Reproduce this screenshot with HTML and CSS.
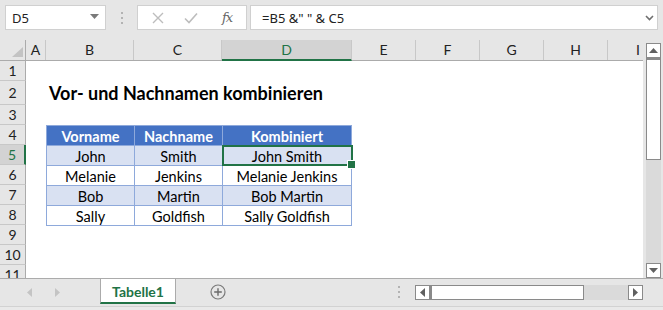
FILE: index.html
```html
<!DOCTYPE html>
<html>
<head>
<meta charset="utf-8">
<link rel="stylesheet" href="styles.css">
</head>
<body>
<div class="app">
  <div class="toolbar">
    <div class="namebox">
      <span class="nb-text">D5</span>
      <svg class="nb-arrow" width="9" height="5" viewBox="0 0 9 5"><polygon points="0,0 9,0 4.5,5" fill="#7a7a7a"/></svg>
    </div>
    <div class="grip">
      <span></span><span></span><span></span>
    </div>
    <div class="fbtns">
      <svg width="12" height="12" viewBox="0 0 12 12"><path d="M1 1 L11 11 M11 1 L1 11" stroke="#bdbdbd" stroke-width="1.4" fill="none"/></svg>
      <svg width="14" height="12" viewBox="0 0 14 12"><path d="M1 6.5 L5 10.5 L13 1.5" stroke="#bdbdbd" stroke-width="1.6" fill="none"/></svg>
      <span class="fx">fx</span>
    </div>
    <div class="formula">
      <span class="f-text">=B5 &amp;" " &amp; C5</span>
      <svg class="f-chev" width="9" height="6" viewBox="0 0 9 6"><path d="M1 1 L4.5 4.5 L8 1" stroke="#6f6f6f" stroke-width="1.6" fill="none"/></svg>
    </div>
  </div>

  <div class="main">
    <div class="sheet">
      <div class="colhdrs">
        <div class="corner"><svg width="11" height="10" viewBox="0 0 11 10"><polygon points="11,0 11,10 0,10" fill="#c3c3c3"/></svg></div>
        <div class="ch w-a">A</div>
        <div class="ch w-b">B</div>
        <div class="ch w-c">C</div>
        <div class="ch w-d sel">D</div>
        <div class="ch w-e">E</div>
        <div class="ch w-e">F</div>
        <div class="ch w-e">G</div>
        <div class="ch w-e">H</div>
        <div class="ch w-i">I</div>
      </div>
      <div class="sheetbody">
        <div class="rowhdrs">
          <div class="rh">1</div>
          <div class="rh tall">2</div>
          <div class="rh">3</div>
          <div class="rh">4</div>
          <div class="rh sel">5</div>
          <div class="rh">6</div>
          <div class="rh">7</div>
          <div class="rh">8</div>
          <div class="rh">9</div>
          <div class="rh">10</div>
          <div class="rh">11</div>
        </div>
        <div class="cells">
          <div class="title">Vor- und Nachnamen kombinieren</div>
          <div class="tbl">
            <div class="c hd">Vorname</div>
            <div class="c hd">Nachname</div>
            <div class="c hd wide">Kombiniert</div>

            <div class="c band">John</div>
            <div class="c band">Smith</div>
            <div class="c band wide active">John Smith</div>

            <div class="c">Melanie</div>
            <div class="c">Jenkins</div>
            <div class="c wide">Melanie Jenkins</div>

            <div class="c band">Bob</div>
            <div class="c band">Martin</div>
            <div class="c band wide">Bob Martin</div>

            <div class="c">Sally</div>
            <div class="c">Goldfish</div>
            <div class="c wide">Sally Goldfish</div>
          </div>
        </div>
      </div>
    </div>
    <div class="vscroll">
      <div class="sbtn"><svg width="9" height="5" viewBox="0 0 9 5"><polygon points="0,5 9,5 4.5,0" fill="#606060"/></svg></div>
      <div class="vthumb"></div>
      <div class="vtrack"></div>
      <div class="sbtn"><svg width="9" height="5" viewBox="0 0 9 5"><polygon points="0,0 9,0 4.5,5" fill="#606060"/></svg></div>
    </div>
  </div>

  <div class="tabbar">
    <div class="tabnav">
      <svg width="5" height="9" viewBox="0 0 5 9"><polygon points="5,0 5,9 0,4.5" fill="#c4c4c4"/></svg>
      <svg width="5" height="9" viewBox="0 0 5 9"><polygon points="0,0 0,9 5,4.5" fill="#c4c4c4"/></svg>
    </div>
    <div class="tab">Tabelle1</div>
    <div class="addsheet">
      <svg width="16" height="16" viewBox="0 0 16 16"><circle cx="8" cy="8" r="7" fill="none" stroke="#7a7a7a" stroke-width="1.2"/><path d="M8 4.2 V11.8 M4.2 8 H11.8" stroke="#6a6a6a" stroke-width="1.4"/></svg>
    </div>
    <div class="tabgrip"><span></span><span></span><span></span></div>
    <div class="hscroll">
      <div class="sbtn h"><svg width="5" height="9" viewBox="0 0 5 9"><polygon points="5,0 5,9 0,4.5" fill="#606060"/></svg></div>
      <div class="hthumb"></div>
      <div class="htrack"></div>
      <div class="sbtn h"><svg width="5" height="9" viewBox="0 0 5 9"><polygon points="0,0 0,9 5,4.5" fill="#606060"/></svg></div>
    </div>
  </div>
  <div class="bottomline"></div>
</div>
</body>
</html>
```

FILE: styles.css
```css
* { box-sizing: border-box; }
html, body { margin: 0; padding: 0; }
body {
  background: #e6e6e6;
  width: 663px;
  height: 310px;
  overflow: hidden;
  font-family: Lato, "Liberation Sans", sans-serif;
}
.app { width: 663px; height: 310px; display: flex; flex-direction: column; }

/* toolbar */
.toolbar {
  height: 40px;
  display: flex;
  align-items: flex-start;
  padding: 5px 5px 0 5px;
}
.namebox {
  width: 101px; height: 25px;
  background: #fff;
  border: 1px solid #d0d0d0;
  display: flex; align-items: center;
  padding: 0 0 0 6px;
  font-family: "Noto Sans", "Open Sans", sans-serif;
  font-size: 13px; color: #222;
}
.nb-text { flex: 1; }
.nb-arrow { margin-right: 6px; margin-top: -2px; }
.grip {
  width: 31px; height: 25px;
  display: flex; flex-direction: column; align-items: center; justify-content: center; gap: 3px;
}
.grip span, .tabgrip span { width: 2px; height: 2px; background: #b3b3b3; display: block; }
.fbtns {
  width: 110px; height: 25px;
  background: #fff;
  border: 1px solid #d0d0d0;
  display: flex; align-items: center;
  padding-left: 14px;
  gap: 0;
}
.fbtns svg:first-child { margin-right: 20px; }
.fbtns svg:nth-child(2) { margin-right: 24px; }
.fx {
  font-family: "DejaVu Serif", "Liberation Serif", serif;
  font-style: italic; font-size: 13px; color: #666;
  letter-spacing: -1px;
}
.formula {
  margin-left: 3px;
  width: 408px; height: 25px;
  background: #fff;
  border: 1px solid #d0d0d0;
  display: flex; align-items: center;
  padding-left: 11px;
  font-family: "Noto Sans", "Open Sans", sans-serif;
  font-size: 13px; color: #222;
}
.f-text { flex: 1; }
.f-chev { margin-right: 3px; }

/* main */
.main { height: 238px; display: flex; }
.sheet { width: 643px; height: 238px; display: flex; flex-direction: column; }
.colhdrs {
  height: 21px; display: flex;
  border-bottom: 1px solid #ababab;
}
.corner {
  width: 26px; border-right: 1px solid #ababab;
  display: flex; align-items: flex-end; justify-content: flex-end;
  padding: 0 2px 3px 0;
}
.ch {
  border-right: 1px solid #c8c8c8;
  display: flex; align-items: center; justify-content: center;
  font-size: 14px; color: #222;
  padding-bottom: 1px;
}
.w-a { width: 20px; }
.w-b { width: 88px; }
.w-c { width: 88px; }
.w-d { width: 130px; }
.w-e { width: 64px; }
.w-i { flex: 1; border-right: none; justify-content: flex-end; padding-right: 3px; }
.ch.sel {
  background: #d3d3d3;
  border-bottom: 2px solid #217346;
  color: #217346;
  margin-bottom: -1px;
}
.sheetbody { flex: 1; display: flex; overflow: hidden; }
.rowhdrs { width: 26px; display: flex; flex-direction: column; }
.rh {
  height: 20px; flex: none;
  border-right: 1px solid #ababab;
  border-bottom: 1px solid #c8c8c8;
  display: flex; align-items: center; justify-content: center;
  font-size: 14px; color: #222;
}
.rh.tall { height: 24px; }
.rh.sel { background: #d3d3d3; color: #217346; border-right: 2px solid #217346; }
.cells { flex: 1; background: #fff; }
.title {
  margin-top: 20px; height: 24px;
  padding-left: 23px;
  font-weight: bold; font-size: 18px; color: #000;
  line-height: 25px;
}
.tbl {
  margin-top: 20px; margin-left: 20px;
  width: 306px;
  display: grid;
  grid-template-columns: 88px 88px 130px;
  border-left: 1px solid #8ea9db;
  border-top: 1px solid #8ea9db;
}
.c {
  height: 20px;
  border-right: 1px solid #8ea9db;
  border-bottom: 1px solid #8ea9db;
  display: flex; align-items: center; justify-content: center;
  font-size: 14.5px; color: #000;
  padding-top: 1px;
  position: relative;
}
.c.wide { width: 129px; }
.c.hd { background: #4472c4; color: #fff; font-weight: bold; }
.c.band { background: #d9e1f2; }
.c.active::after {
  content: ""; position: absolute;
  left: -1px; top: -1px; right: -2px; bottom: -1px;
  border: 2px solid #217346;
}
.c.active::before {
  content: ""; position: absolute;
  right: -5px; bottom: -4px;
  width: 7px; height: 7px;
  background: #217346; border: 1px solid #fff;
  z-index: 2;
}

/* vertical scrollbar */
.vscroll {
  margin-left: 3px; margin-top: 3px;
  width: 15px; height: 235px;
  display: flex; flex-direction: column;
  background: #dadada;
}
.sbtn {
  width: 15px; height: 15px; flex: none;
  background: #fff; border: 1px solid #8a8a8a;
  display: flex; align-items: center; justify-content: center;
}
.vthumb {
  height: 102px; background: #fff;
  border: 1px solid #8a8a8a; border-top: 2px solid #8a8a8a;
}
.vtrack { flex: 1; }

/* tab bar */
.tabbar {
  height: 28px;
  border-top: 1px solid #ababab;
  display: flex; align-items: flex-start;
}
.tabnav {
  width: 100px; height: 26px;
  display: flex; align-items: center;
  padding-left: 27px; gap: 23px;
}
.tab {
  width: 76px; height: 25px;
  background: #fff;
  border-left: 1px solid #ababab; border-right: 1px solid #ababab;
  border-bottom: 2px solid #217346;
  display: flex; align-items: center; justify-content: center;
  font-weight: bold; font-size: 14px; color: #217346;
  padding-top: 1px;
}
.addsheet {
  width: 84px; height: 26px;
  display: flex; align-items: center; justify-content: center;
}
.tabgrip {
  width: 155px; height: 26px;
  display: flex; flex-direction: column; align-items: flex-end; justify-content: center; gap: 3px;
  padding-right: 15px;
}
.hscroll {
  margin-top: 6px;
  width: 228px; height: 15px;
  display: flex;
}
.hthumb { width: 154px; height: 15px; background: #fff; border: 1px solid #8a8a8a; border-left: 2px solid #8a8a8a; }
.htrack { flex: 1; background: #dadada; }
.bottomline { height: 4px; border-top: 1px solid #d2d2d2; background: #e9e9e9; }
```
